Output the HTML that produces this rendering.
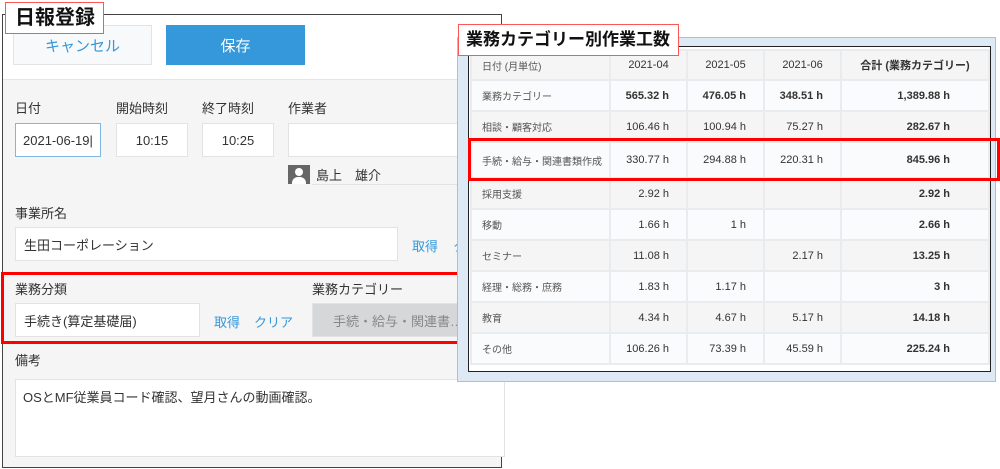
<!DOCTYPE html>
<html><head><meta charset="utf-8"><style>
*{box-sizing:border-box;margin:0;padding:0}
body{width:1000px;height:469px;background:#fff;position:relative;overflow:hidden;font-family:"Liberation Sans","Noto Sans CJK JP",sans-serif;color:#333}
.a{position:absolute}
.inp{position:absolute;background:#fff;border:1px solid #e3e3e3;font-size:13px;color:#333;display:flex;align-items:center}
.lbl{position:absolute;font-size:13px;color:#333}
.lnk{position:absolute;font-size:13px;color:#3498db}
table{border-collapse:collapse;position:absolute;left:470px;top:49px;width:518px;font-size:11px;table-layout:fixed}
td{border:2px solid #e9ecee;height:31px;padding:0 17px 0 0;text-align:right;color:#333;white-space:nowrap}
td:first-child{text-align:left;font-size:10px;color:#555;padding-left:10px}
td:last-child{padding-right:38px}
tr:nth-child(odd) td{background:#f5f5f5}
tr:nth-child(even) td{background:#fafbfc}
td.b{font-weight:bold}
tr.h td{text-align:center;height:30px;font-size:11px;padding-right:0}
tr.h td:first-child{text-align:left;font-size:10px}
</style></head><body>
<div class="a" style="left:2px;top:14px;width:500px;height:454px;border:1px solid #444;background:#f5f5f5"></div>
<div class="a" style="left:3px;top:15px;width:498px;height:65px;background:#fff;border-bottom:1px solid #e6e6e6"></div>
<div class="a" style="left:13px;top:25px;width:139px;height:40px;border:1px solid #e3e3e3;background:#f7f9fa;color:#3498db;font-size:15px;display:flex;align-items:center;justify-content:center">キャンセル</div>
<div class="a" style="left:166px;top:25px;width:139px;height:40px;background:#3498db;color:#fff;font-size:15px;display:flex;align-items:center;justify-content:center">保存</div>
<div class="lbl" style="left:15px;top:98px">日付</div>
<div class="lbl" style="left:116px;top:98px">開始時刻</div>
<div class="lbl" style="left:202px;top:98px">終了時刻</div>
<div class="lbl" style="left:288px;top:98px">作業者</div>
<div class="inp" style="left:15px;top:123px;width:86px;height:34px;border-color:#7fb6e3;padding-left:7px">2021-06-19|</div>
<div class="inp" style="left:116px;top:123px;width:72px;height:34px;justify-content:center">10:15</div>
<div class="inp" style="left:202px;top:123px;width:72px;height:34px;justify-content:center">10:25</div>
<div class="inp" style="left:288px;top:123px;width:200px;height:34px"></div>
<div class="a" style="left:288px;top:165px;width:22px;height:19px;background:#666;overflow:hidden"><div class="a" style="left:7px;top:3px;width:8px;height:8px;border-radius:50%;background:#fff"></div><div class="a" style="left:4px;top:12px;width:14px;height:10px;border-radius:6px 6px 0 0;background:#fff"></div></div>
<div class="lbl" style="left:316px;top:165px">島上　雄介</div>
<div class="a" style="left:312px;top:184px;width:180px;height:1px;background:#e3e3e3"></div>
<div class="lbl" style="left:15px;top:203px">事業所名</div>
<div class="inp" style="left:15px;top:227px;width:383px;height:34px;padding-left:8px">生田コーポレーション</div>
<div class="lnk" style="left:412px;top:236px">取得</div>
<div class="lnk" style="left:453px;top:236px">ク</div>
<div class="lbl" style="left:15px;top:279px">業務分類</div>
<div class="inp" style="left:15px;top:303px;width:185px;height:34px;padding-left:8px">手続き(算定基礎届)</div>
<div class="lnk" style="left:214px;top:312px">取得</div>
<div class="lnk" style="left:254px;top:312px">クリア</div>
<div class="lbl" style="left:312px;top:279px">業務カテゴリー</div>
<div class="inp" style="left:312px;top:303px;width:160px;height:34px;background:#d5d7d8;color:#888;padding-left:20px;white-space:nowrap;overflow:hidden">手続・給与・関連書…</div>
<div class="a" style="left:1px;top:272px;width:470px;height:72px;border:3px solid #f00"></div>
<div class="lbl" style="left:15px;top:350px">備考</div>
<div class="inp" style="left:15px;top:379px;width:490px;height:78px;align-items:flex-start;padding:7px 7px">OSとMF従業員コード確認、望月さんの動画確認。</div>
<div class="a" style="left:5px;top:2px;width:99px;height:32px;border:1px solid #f55;background:#fff;font-size:20px;font-weight:bold;color:#111;padding-left:9px;line-height:30px">日報登録</div>
<div class="a" style="left:457px;top:37px;width:539px;height:345px;background:#dde9f5;border:1px solid #9fc3e7"></div>
<div class="a" style="left:468px;top:46px;width:523px;height:326px;border:1px solid #222;background:#fff"></div>
<table>
<colgroup><col style="width:139px"><col style="width:77px"><col style="width:77px"><col style="width:77px"><col style="width:148px"></colgroup>
<tr class="h"><td>日付 (月単位)</td><td>2021-04</td><td>2021-05</td><td>2021-06</td><td class="b">合計 (業務カテゴリー)</td></tr>
<tr><td>業務カテゴリー</td><td class="b">565.32 h</td><td class="b">476.05 h</td><td class="b">348.51 h</td><td class="b">1,389.88 h</td></tr>
<tr><td>相談・顧客対応</td><td>106.46 h</td><td>100.94 h</td><td>75.27 h</td><td class="b">282.67 h</td></tr>
<tr><td style="height:36px">手続・給与・関連書類作成</td><td>330.77 h</td><td>294.88 h</td><td>220.31 h</td><td class="b">845.96 h</td></tr>
<tr><td>採用支援</td><td>2.92 h</td><td></td><td></td><td class="b">2.92 h</td></tr>
<tr><td>移動</td><td>1.66 h</td><td>1 h</td><td></td><td class="b">2.66 h</td></tr>
<tr><td>セミナー</td><td>11.08 h</td><td></td><td>2.17 h</td><td class="b">13.25 h</td></tr>
<tr><td>経理・総務・庶務</td><td>1.83 h</td><td>1.17 h</td><td></td><td class="b">3 h</td></tr>
<tr><td>教育</td><td>4.34 h</td><td>4.67 h</td><td>5.17 h</td><td class="b">14.18 h</td></tr>
<tr><td>その他</td><td>106.26 h</td><td>73.39 h</td><td>45.59 h</td><td class="b">225.24 h</td></tr>
</table>
<div class="a" style="left:468px;top:138px;width:532px;height:43px;border:3px solid #f00"></div>
<div class="a" style="left:458px;top:24px;width:221px;height:32px;border:1px solid #f55;background:#fff;font-size:17px;font-weight:bold;color:#111;padding-left:7px;line-height:30px;white-space:nowrap">業務カテゴリー別作業工数</div>
</body></html>
